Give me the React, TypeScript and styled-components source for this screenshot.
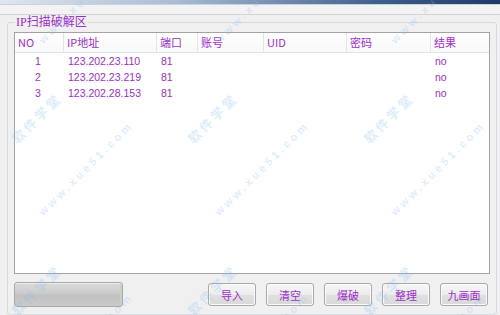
import * as React from 'react';
import styled, { createGlobalStyle } from 'styled-components';

const purple = '#9b2fc9';
const cjk = '"Noto Sans CJK SC", "Liberation Sans", sans-serif';

const columns = ['NO', 'IP地址', '端口', '账号', 'UID', '密码', '结果'];

const rows = [
    { no: '1', ip: '123.202.23.110', port: '81', result: 'no' },
    { no: '2', ip: '123.202.23.219', port: '81', result: 'no' },
    { no: '3', ip: '123.202.28.153', port: '81', result: 'no' },
];

const buttons = ['导入', '清空', '爆破', '整理', '九画面'];

const tileX = [0, 176, 352];
const tileY = [-172, 0, 172];

const App = () => (
    <>
        <GlobalStyle />
        <Window>
            <TitleStrip />
            <TopBand />
            <GroupBox>
                <Legend>IP扫描破解区</Legend>
                <ListView>
                    <HeaderRow>
                        {columns.map((c, i) => (
                            <HeaderCell key={c} $last={i === columns.length - 1}>
                                {c}
                            </HeaderCell>
                        ))}
                    </HeaderRow>
                    {rows.map(r => (
                        <DataRow key={r.no}>
                            <NoCell>{r.no}</NoCell>
                            <Cell>{r.ip}</Cell>
                            <Cell>{r.port}</Cell>
                            <Cell />
                            <Cell />
                            <Cell />
                            <Cell>{r.result}</Cell>
                        </DataRow>
                    ))}
                </ListView>
                <BottomBar>
                    <Progress />
                    <Buttons>
                        {buttons.map(b => (
                            <Button key={b}>{b}</Button>
                        ))}
                    </Buttons>
                </BottomBar>
            </GroupBox>
            <Watermarks>
                {tileY.map(y =>
                    tileX.map(x => (
                        <React.Fragment key={`${x}-${y}`}>
                            <MarkName style={{ left: x + 9, top: y + 136 }}>软件学堂</MarkName>
                            <MarkUrl style={{ left: x + 37, top: y + 210 }}>www.xue51.com</MarkUrl>
                        </React.Fragment>
                    ))
                )}
            </Watermarks>
        </Window>
    </>
);

const GlobalStyle = createGlobalStyle`
    html, body {
        margin: 0;
        padding: 0;
        background: #f0f0f0;
    }
`;

const Window = styled.div`
    position: relative;
    width: 500px;
    height: 315px;
    overflow: hidden;
    background: #f0f0f0;
    font-family: "Liberation Sans", ${cjk};
    display: flex;
    flex-direction: column;
`;

const TitleStrip = styled.div`
    height: 4px;
    background: linear-gradient(to right, #dfe6ee 0%, #a9bdd4 35%, #40618c 75%, #1c3a66 100%);
    border-bottom: 1px solid #c9d3de;
`;

const TopBand = styled.div`
    height: 9px;
    background: #f3f3f3;
    border-bottom: 1px solid #d4d4d4;
`;

const GroupBox = styled.fieldset`
    margin: 1px 3px 0 7px;
    padding: 0 5px 4px 6px;
    border: 1px solid #d5dbe0;
    border-radius: 3px;
    flex: 1;
    min-width: 0;
    display: flex;
    flex-direction: column;
`;

const Legend = styled.legend`
    margin-left: 1px;
    padding: 0 1px;
    font-family: "Liberation Serif", ${cjk};
    font-size: 12px;
    line-height: 12px;
    color: ${purple};
`;

const ListView = styled.div`
    margin-top: 4px;
    width: 474px;
    height: 240px;
    background: #fff;
    border: 1px solid #a3a3a3;
`;

const grid = '49px 93px 41px 66px 83px 84px 1fr';

const HeaderRow = styled.div`
    display: grid;
    grid-template-columns: ${grid};
    height: 19px;
    background: linear-gradient(#ffffff, #f7f8f9);
    border-bottom: 1px solid #e3e5e8;
`;

const HeaderCell = styled.div<{ $last?: boolean }>`
    padding-left: 3px;
    border-right: ${p => (p.$last ? 'none' : '1px solid #e5e5e5')};
    font-family: ${cjk};
    font-size: 11px;
    line-height: 19px;
    color: ${purple};
`;

const DataRow = styled.div`
    display: grid;
    grid-template-columns: ${grid};
    height: 16px;
    &:first-of-type {
        margin-top: 1px;
    }
`;

const Cell = styled.div`
    padding-left: 4px;
    font-size: 10.5px;
    line-height: 16px;
    color: ${purple};
    white-space: nowrap;
`;

const NoCell = styled(Cell)`
    padding-left: 20px;
`;

const BottomBar = styled.div`
    margin-top: 8px;
    width: 476px;
    display: flex;
    align-items: center;
    justify-content: space-between;
`;

const Progress = styled.div`
    width: 107px;
    height: 23px;
    border: 1px solid #a8a8a8;
    border-radius: 3px;
    background: linear-gradient(#dadada 0%, #cbcbcb 45%, #c1c1c1 55%, #c9cbc8 100%);
    box-shadow: inset 0 1px 0 #ededed, inset -2px 0 0 #c7d2c4;
`;

const Buttons = styled.div`
    display: flex;
    gap: 10px;
    padding-right: 2px;
`;

const Button = styled.button`
    width: 48px;
    height: 23px;
    padding: 0;
    border: 1px solid #a9a9a9;
    border-radius: 3px;
    background: linear-gradient(#f7f7f7 0%, #ececec 50%, #e0e0e0 51%, #d9d9d9 100%);
    box-shadow: inset 0 0 0 1px #fbfbfb;
    font-family: ${cjk};
    font-size: 11px;
    color: ${purple};
`;

const Watermarks = styled.div`
    position: absolute;
    inset: 0;
    pointer-events: none;
`;

const MarkName = styled.div`
    position: absolute;
    transform-origin: 0 0;
    transform: rotate(-45deg);
    font-family: ${cjk};
    font-weight: bold;
    font-size: 13px;
    line-height: 13px;
    letter-spacing: 3px;
    white-space: nowrap;
    color: rgba(140, 190, 240, 0.3);
`;

const MarkUrl = styled.div`
    position: absolute;
    transform-origin: 0 0;
    transform: rotate(-45deg);
    font-family: "Liberation Sans", sans-serif;
    font-weight: bold;
    font-size: 11px;
    line-height: 11px;
    letter-spacing: 3.3px;
    white-space: nowrap;
    color: rgba(140, 190, 240, 0.28);
`;

export default App;
